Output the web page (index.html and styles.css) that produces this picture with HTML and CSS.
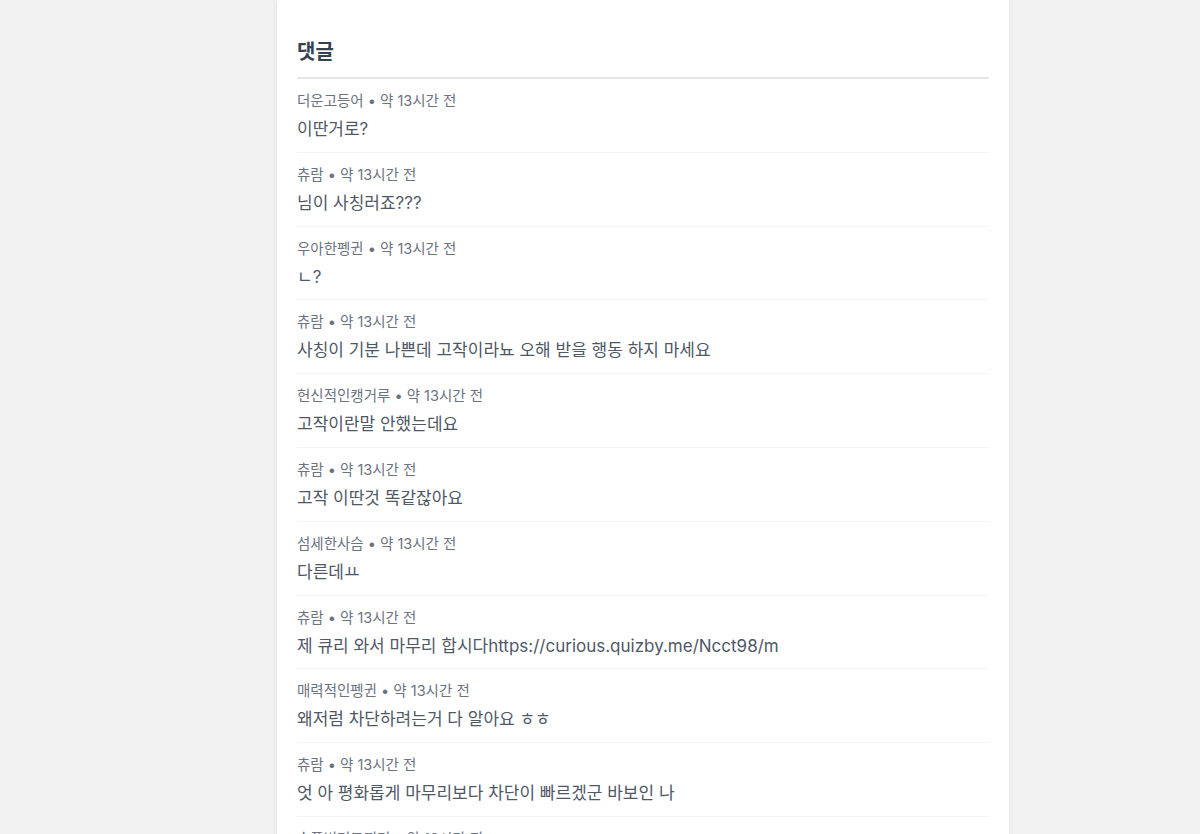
FILE: index.html
```html
<!DOCTYPE html>
<html>

<head>
    <title>댓글</title>
    <link rel="stylesheet" href="styles.css">
</head>

<body>
    <div class="page">
        <div class="card">
            <h2 class="comments-title">댓글</h2>
            <ul class="comment-list">
                <li class="comment">
                    <div class="meta">더운고등어 • 약 13시간 전</div>
                    <div class="text">이딴거로?</div>
                </li>
                <li class="comment">
                    <div class="meta">츄람 • 약 13시간 전</div>
                    <div class="text">님이 사칭러죠???</div>
                </li>
                <li class="comment">
                    <div class="meta">우아한펭귄 • 약 13시간 전</div>
                    <div class="text">ㄴ?</div>
                </li>
                <li class="comment">
                    <div class="meta">츄람 • 약 13시간 전</div>
                    <div class="text">사칭이 기분 나쁜데 고작이라뇨 오해 받을 행동 하지 마세요</div>
                </li>
                <li class="comment">
                    <div class="meta">헌신적인캥거루 • 약 13시간 전</div>
                    <div class="text">고작이란말 안했는데요</div>
                </li>
                <li class="comment">
                    <div class="meta">츄람 • 약 13시간 전</div>
                    <div class="text">고작 이딴것 똑같잖아요</div>
                </li>
                <li class="comment">
                    <div class="meta">섬세한사슴 • 약 13시간 전</div>
                    <div class="text">다른데ㅛ</div>
                </li>
                <li class="comment">
                    <div class="meta">츄람 • 약 13시간 전</div>
                    <div class="text">제 큐리 와서 마무리 합시다https://curious.quizby.me/Ncct98/m</div>
                </li>
                <li class="comment">
                    <div class="meta">매력적인펭귄 • 약 13시간 전</div>
                    <div class="text">왜저럼 차단하려는거 다 알아요 ㅎㅎ</div>
                </li>
                <li class="comment">
                    <div class="meta">츄람 • 약 13시간 전</div>
                    <div class="text">엇 아 평화롭게 마무리보다 차단이 빠르겠군 바보인 나</div>
                </li>
                <li class="comment">
                    <div class="meta">순풍버터코끼리 • 약 13시간 전</div>
                    <div class="text">ㅋㅋ</div>
                </li>
            </ul>
        </div>
    </div>
</body>

</html>
```

FILE: styles.css
```css
html,
body {
    margin: 0;
    padding: 0;
    height: 100%;
    overflow: hidden;
}

body {
    background-color: #f2f2f2;
    font-family: "Inter", "Noto Sans CJK KR", sans-serif;
    color: #4b5563;
}

.page {
    display: flex;
    justify-content: center;
    padding-left: 86px;
}

.card {
    width: 732px;
    box-sizing: border-box;
    background-color: #fff;
    padding: 38px 20px 0 20px;
    box-shadow: 0 0 6px rgba(0, 0, 0, 0.08);
    min-height: 900px;
}

.comments-title {
    margin: 0;
    font-size: 20px;
    line-height: 28px;
    font-weight: 700;
    color: #374151;
    padding-bottom: 11px;
    border-bottom: 2px solid #e5e7eb;
}

.comment-list {
    list-style: none;
    margin: 0;
    padding: 0;
}

.comment {
    padding: 12px 0 8.8px 0;
    border-bottom: 1px solid #f3f4f6;
}

.meta {
    font-size: 14.5px;
    line-height: 20px;
    color: #6b7280;
}

.text {
    margin-top: 4px;
    font-size: 17px;
    line-height: 28px;
    color: #4f5866;
}
```
